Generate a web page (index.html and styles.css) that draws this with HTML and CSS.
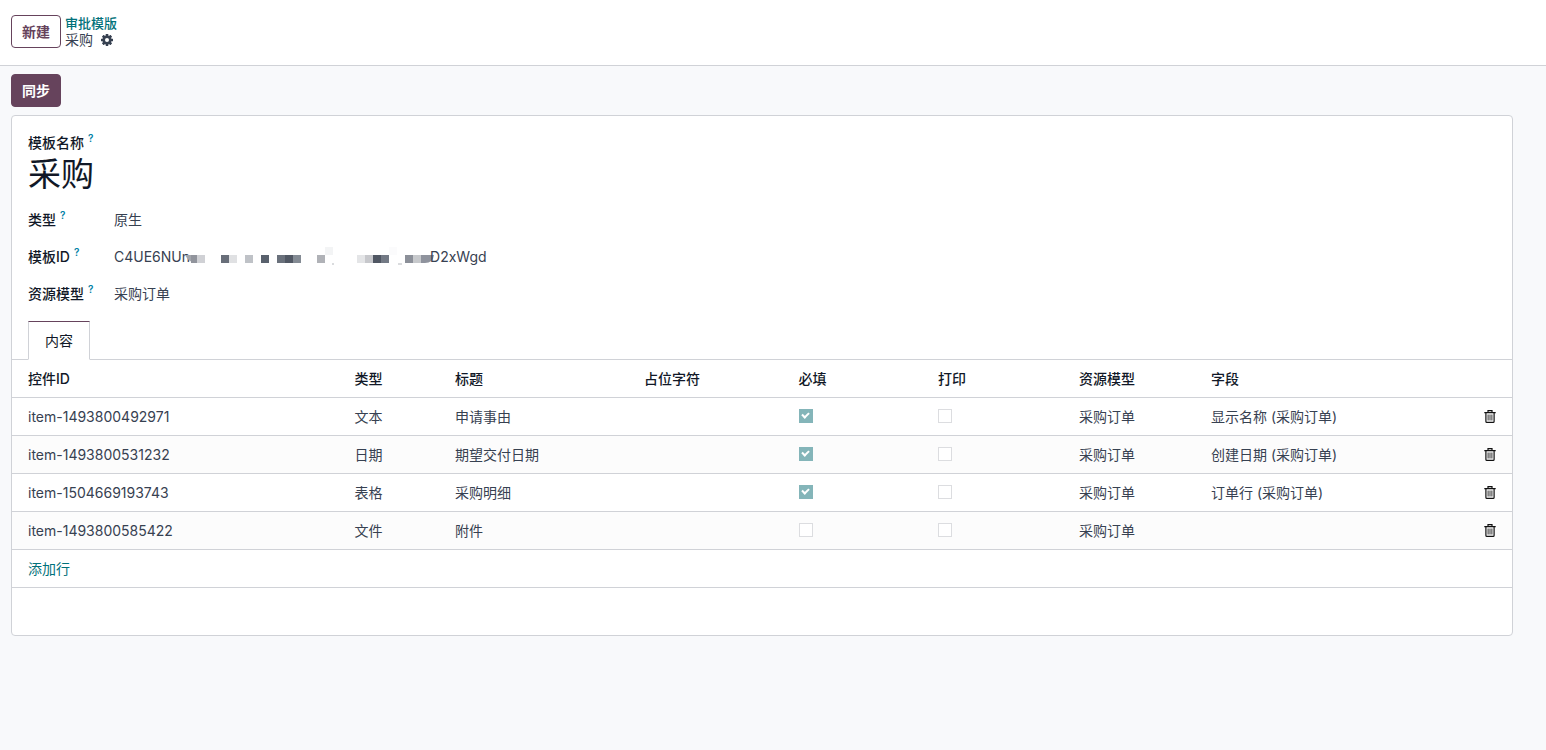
FILE: index.html
```html
<!DOCTYPE html>
<html lang="zh-CN">

<head>
    <meta charset="UTF-8">
    <meta name="viewport" content="width=device-width, initial-scale=1.0">
    <title>审批模版</title>
    <link rel="stylesheet" href="styles.css">
</head>

<body>
    <svg class="sprite" aria-hidden="true">
        <symbol id="trash" viewBox="0 0 12 13">
            <path d="M4 2V.7h4V2M.3 2.6h11.4M1.9 3v8.4q0 1 1 1h6.2q1 0 1-1V3" fill="none" stroke="#111" stroke-width="1.2" />
            <path d="M4.1 4.5v6M6 4.5v6M7.9 4.5v6" fill="none" stroke="#333" stroke-width="1" />
        </symbol>
    </svg>
    <header class="control-panel">
        <button class="btn btn-outline">新建</button>
        <nav class="breadcrumb">
            <a href="#">审批模版</a>
            <div class="current">
                <span>采购</span>
                <button class="icon-btn" aria-label="操作">
                    <svg width="12" height="12" viewBox="0 0 12 12">
                        <g fill="#374151">
                            <rect x="4.7" width="2.6" height="12" rx=".4" />
                            <rect x="4.7" width="2.6" height="12" rx=".4" transform="rotate(45 6 6)" />
                            <rect x="4.7" width="2.6" height="12" rx=".4" transform="rotate(90 6 6)" />
                            <rect x="4.7" width="2.6" height="12" rx=".4" transform="rotate(135 6 6)" />
                            <circle cx="6" cy="6" r="4.6" />
                        </g>
                        <circle cx="6" cy="6" r="2" fill="#fff" />
                    </svg>
                </button>
            </div>
        </nav>
    </header>
    <main>
        <div class="statusbar">
            <button class="btn btn-primary">同步</button>
        </div>
        <section class="sheet">
            <div class="title">
                <label for="name">模板名称<sup>?</sup></label>
                <output id="name">采购</output>
            </div>
            <div class="fields">
                <label for="type">类型<sup>?</sup></label>
                <output id="type">原生</output>
                <label for="templateId">模板ID<sup>?</sup></label>
                <output id="templateId" class="masked">
                    <span>C4UE6NUn</span>
                    <svg class="mosaic" width="248" height="20" viewBox="0 0 248 20">
                        <path d="M-2 8q4 8 12 8V8z" fill="#a3a6ac" />
                        <rect x="4" y="8" width="6" height="8" fill="#91949c" />
                        <rect x="10" y="8" width="8" height="8" fill="#d0d1d5" />
                        <rect x="34" y="8" width="8" height="8" fill="#686e79" />
                        <rect x="42" y="8" width="8" height="8" fill="#e0e1e3" />
                        <rect x="58" y="8" width="8" height="8" fill="#bfc2c7" />
                        <rect x="74" y="8" width="8" height="8" fill="#59616d" />
                        <rect x="90" y="8" width="8" height="8" fill="#6a717c" />
                        <rect x="98" y="8" width="8" height="8" fill="#515864" />
                        <rect x="106" y="8" width="8" height="8" fill="#848b94" />
                        <rect x="130" y="8" width="8" height="8" fill="#b0b2b7" />
                        <rect x="138" y="0" width="8" height="8" fill="#f3f4f5" />
                        <rect x="170" y="8" width="8" height="8" fill="#e4e5e7" />
                        <rect x="178" y="8" width="8" height="8" fill="#c7c8cc" />
                        <rect x="186" y="8" width="8" height="8" fill="#505763" />
                        <rect x="194" y="8" width="8" height="8" fill="#737a85" />
                        <rect x="202" y="0" width="8" height="8" fill="#fbfbfc" />
                        <path d="M145 17h2M211 17h4" stroke="#b5b8bd" />
                        <rect x="218" y="8" width="8" height="8" fill="#8c9099" />
                        <rect x="226" y="8" width="8" height="8" fill="#c7c9cc" />
                        <path d="M234 8h13q-1 8-9 8h-4z" fill="#8f939d" />
                    </svg>
                    <span>D2xWgd</span>
                </output>
                <label for="model">资源模型<sup>?</sup></label>
                <output id="model">采购订单</output>
            </div>
            <div class="tabs" role="tablist">
                <button class="tab" role="tab" aria-selected="true">内容</button>
            </div>
            <table>
                <colgroup>
                    <col class="col-id">
                    <col class="col-type">
                    <col class="col-title">
                    <col class="col-placeholder">
                    <col class="col-required">
                    <col class="col-print">
                    <col class="col-model">
                    <col>
                </colgroup>
                <thead>
                    <tr>
                        <th>控件ID</th>
                        <th>类型</th>
                        <th>标题</th>
                        <th>占位字符</th>
                        <th>必填</th>
                        <th>打印</th>
                        <th>资源模型</th>
                        <th>字段</th>
                    </tr>
                </thead>
                <tbody>
                    <tr>
                        <td>item-1493800492971</td>
                        <td>文本</td>
                        <td>申请事由</td>
                        <td></td>
                        <td><input type="checkbox" aria-label="必填" checked disabled></td>
                        <td><input type="checkbox" aria-label="打印" disabled></td>
                        <td>采购订单</td>
                        <td>
                            <div class="last">显示名称 (采购订单)<button class="icon-btn" aria-label="删除"><svg width="12" height="13"><use href="#trash" /></svg></button></div>
                        </td>
                    </tr>
                    <tr>
                        <td>item-1493800531232</td>
                        <td>日期</td>
                        <td>期望交付日期</td>
                        <td></td>
                        <td><input type="checkbox" aria-label="必填" checked disabled></td>
                        <td><input type="checkbox" aria-label="打印" disabled></td>
                        <td>采购订单</td>
                        <td>
                            <div class="last">创建日期 (采购订单)<button class="icon-btn" aria-label="删除"><svg width="12" height="13"><use href="#trash" /></svg></button></div>
                        </td>
                    </tr>
                    <tr>
                        <td>item-1504669193743</td>
                        <td>表格</td>
                        <td>采购明细</td>
                        <td></td>
                        <td><input type="checkbox" aria-label="必填" checked disabled></td>
                        <td><input type="checkbox" aria-label="打印" disabled></td>
                        <td>采购订单</td>
                        <td>
                            <div class="last">订单行 (采购订单)<button class="icon-btn" aria-label="删除"><svg width="12" height="13"><use href="#trash" /></svg></button></div>
                        </td>
                    </tr>
                    <tr>
                        <td>item-1493800585422</td>
                        <td>文件</td>
                        <td>附件</td>
                        <td></td>
                        <td><input type="checkbox" aria-label="必填" disabled></td>
                        <td><input type="checkbox" aria-label="打印" disabled></td>
                        <td>采购订单</td>
                        <td>
                            <div class="last"><button class="icon-btn" aria-label="删除"><svg width="12" height="13"><use href="#trash" /></svg></button></div>
                        </td>
                    </tr>
                    <tr>
                        <td colspan="8"><a href="#">添加行</a></td>
                    </tr>
                </tbody>
            </table>
        </section>
    </main>
</body>

</html>
```
FILE: styles.css
```css
* {
    box-sizing: border-box;
}

body {
    margin: 0;
    min-height: 100vh;
    background: #f8f9fb;
    color: #374151;
    font-family: Inter, 'Noto Sans CJK SC', sans-serif;
    font-size: 14px;
    line-height: 21px;
}

a {
    color: #01717a;
    text-decoration: none;
}

button {
    font: inherit;
    color: inherit;
    cursor: pointer;
}

svg {
    display: block;
}

.sprite {
    display: none;
}

.control-panel {
    display: flex;
    align-items: center;
    gap: 4px;
    height: 66px;
    padding: 0 11px 2px;
    background: #fff;
    border-bottom: 1px solid #d0d2d7;
}

.btn {
    height: 33px;
    padding: 0 10px;
    border: 1px solid #66435c;
    border-radius: 4px;
    font-weight: 700;
}

.btn-outline {
    background: #fff;
    color: #66435c;
}

.btn-primary {
    background: #66435c;
    color: #fff;
}

.breadcrumb {
    line-height: 17px;
}

.breadcrumb a {
    display: block;
    font-size: 13px;
    font-weight: 500;
}

.current {
    display: flex;
    align-items: center;
    gap: 8px;
    line-height: 16px;
}

.icon-btn {
    padding: 0;
    border: 0;
    background: none;
}

main {
    padding: 8px 33px 8px 11px;
}

.statusbar {
    display: flex;
    margin-bottom: 8px;
}

.sheet {
    padding: 16px 0 47px;
    background: #fff;
    border: 1px solid #d0d2d7;
    border-radius: 4px;
}

label,
th {
    color: #111827;
    font-weight: 500;
}

sup {
    margin-left: 4px;
    color: #0180a5;
    font-size: 10px;
    font-weight: 600;
    line-height: 0;
}

.title {
    padding: 0 16px;
}

.title label,
.title output {
    display: block;
}

.title output {
    color: #111827;
    font-size: 33px;
    line-height: 42px;
}

.fields {
    display: grid;
    grid-template-columns: 86px 1fr;
    row-gap: 16px;
    padding: 14px 16px 17px;
}

.masked {
    display: flex;
}

/* the mask covers the edges of the text on both sides */
.mosaic {
    margin: 1px -5px 0 -3px;
    overflow: visible;
}

.tabs {
    display: flex;
    padding: 0 16px;
    border-bottom: 1px solid #d0d2d7;
}

.tab {
    height: 39px;
    margin-bottom: -1px;
    padding: 0 16px;
    background: #fff;
    border: 1px solid #d0d2d7;
    border-top-color: #66435c;
    border-bottom-color: #fff;
    color: #111827;
}

table {
    width: 100%;
    table-layout: fixed;
    border-collapse: separate;
    border-spacing: 0;
}

th,
td {
    height: 38px;
    padding: 0 5px;
    border-bottom: 1px solid #d0d2d7;
    text-align: left;
    white-space: nowrap;
}

th:first-child,
td:first-child {
    padding-left: 16px;
}

td:last-child {
    padding-right: 16px;
}

tbody tr:nth-child(even) {
    background: #fcfcfc;
}

.col-id {
    width: 22.5%;
}

.col-type {
    width: 6.7%;
}

.col-title {
    width: 12.6%;
}

.col-placeholder {
    width: 10.3%;
}

.col-required {
    width: 9.3%;
}

.col-print {
    width: 9.4%;
}

.col-model {
    width: 8.8%;
}

.last {
    display: flex;
    align-items: center;
}

.last .icon-btn {
    margin-left: auto;
}

input[type=checkbox] {
    appearance: none;
    display: block;
    width: 14px;
    height: 14px;
    margin: 0 0 2px;
    border: 1px solid #dcdde0;
    background: #fff;
}

input[type=checkbox]:checked {
    display: grid;
    place-items: center;
    border-color: #84b5b9;
    background: #84b5b9;
}

input[type=checkbox]:checked::before {
    content: '';
    box-sizing: border-box;
    width: 7px;
    height: 5px;
    margin-bottom: 2px;
    border-left: 2px solid #fff;
    border-bottom: 2px solid #fff;
    transform: rotate(-45deg);
}
```
